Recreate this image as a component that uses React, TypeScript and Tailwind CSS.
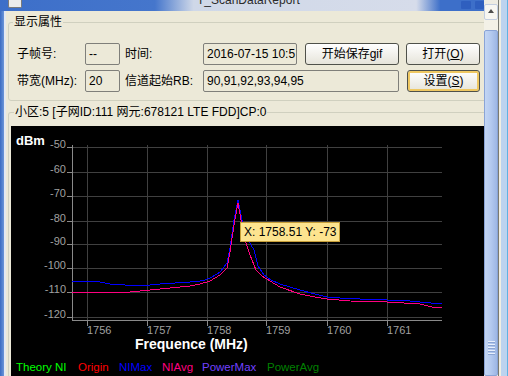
import React from 'react';

const blueLine =
  '61,156 69,155 79,155 89,156 99,158 114,159 129,160 139,159 149,158 164,157 179,156 189,155 194,154 201,151 209,146 216,137 219,122 223,94 227,74 230,89 233,104 237,114 243,124 247,140 253,149 260,154 269,158 279,161 289,164 304,168 316,171 329,172 349,173 376,174 389,174 409,176 431,178';

const pinkLine =
  '61,166 79,166 99,167 119,166 139,164 159,162 179,160 189,158 199,155 209,149 216,142 219,126 223,99 227,77 230,94 234,114 239,129 245,144 251,150 259,155 269,161 289,168 304,171 316,173 339,175 376,176 409,178 421,181 431,182';

const yTicks = [
  { y: 21, label: '-50' },
  { y: 46, label: '-60' },
  { y: 70, label: '-70' },
  { y: 95, label: '-80' },
  { y: 118, label: '-90' },
  { y: 142, label: '-100' },
  { y: 166, label: '-110' },
  { y: 191, label: '-120' },
];

const xTicks = [
  { x: 76, label: '1756' },
  { x: 136, label: '1757' },
  { x: 196, label: '1758' },
  { x: 255, label: '1759' },
  { x: 316, label: '1760' },
  { x: 376, label: '1761' },
];

const legend = [
  { name: 'Theory NI', cls: 'w-[62px] text-[#00ff00]' },
  { name: 'Origin', cls: 'w-[41px] text-[#ff0000]' },
  { name: 'NIMax', cls: 'w-[43px] text-[#0000ff]' },
  { name: 'NIAvg', cls: 'w-[40px] text-[#ff0080]' },
  { name: 'PowerMax', cls: 'w-[65px] text-[#7040ff]' },
  { name: 'PowerAvg', cls: 'text-[#008000]' },
];

function Field({ w, children }: { w: string; children?: React.ReactNode }) {
  return (
    <div
      className={`${w} flex h-[22px] shrink-0 items-center overflow-hidden whitespace-nowrap rounded-[2px] border border-[#7f7f7a] pl-[3px]`}
    >
      {children}
    </div>
  );
}

function Btn({ w, focus, children }: { w: string; focus?: boolean; children: React.ReactNode }) {
  return (
    <div
      className={`${w} flex h-[22px] shrink-0 items-center justify-center rounded-[3px] border border-[#4f514a] bg-gradient-to-b from-[#ffffff] to-[#e6e4da] ${
        focus ? 'shadow-[inset_0_0_0_2px_#efc862]' : ''
      }`}
    >
      {children}
    </div>
  );
}

function Chart() {
  return (
    <div className="relative mt-[6px] h-[252px] bg-black">
      <svg width="475" height="234" className="block">
        <text x="5" y="19" fill="#fff" fontSize="13" fontWeight="bold" fontFamily="Liberation Sans, sans-serif">
          dBm
        </text>
        <g stroke="#404040" strokeWidth="1" shapeRendering="crispEdges">
          {yTicks.map(t => (
            <line key={t.label} x1="61" x2="431" y1={t.y + 0.5} y2={t.y + 0.5} />
          ))}
          {xTicks.map(t => (
            <line key={t.label} x1={t.x + 0.5} x2={t.x + 0.5} y1="19" y2="194" />
          ))}
        </g>
        <g stroke="#8a8a8a" strokeWidth="1" shapeRendering="crispEdges">
          <line x1="61.5" x2="61.5" y1="19" y2="195" />
          <line x1="61" x2="431" y1="194.5" y2="194.5" />
          {yTicks.map(t => (
            <line key={t.label} x1="56" x2="61" y1={t.y + 0.5} y2={t.y + 0.5} />
          ))}
          {xTicks.map(t => (
            <line key={t.label} x1={t.x + 0.5} x2={t.x + 0.5} y1="194" y2="200" />
          ))}
        </g>
        <g fill="#a0a0a0" fontSize="11" fontFamily="Liberation Sans, sans-serif">
          {yTicks.map(t => (
            <text key={t.label} x="55" y={t.y + 1} textAnchor="end">
              {t.label}
            </text>
          ))}
          {xTicks.map(t => (
            <text key={t.label} x={t.x} y="208">
              {t.label}
            </text>
          ))}
        </g>
        <polyline points={blueLine} fill="none" stroke="#0000ff" strokeWidth="1" shapeRendering="crispEdges" />
        <polyline points={pinkLine} fill="none" stroke="#ff0080" strokeWidth="1" shapeRendering="crispEdges" />
        <text x="124" y="223" fill="#fff" fontSize="14" fontWeight="bold" fontFamily="Liberation Sans, sans-serif">
          Frequence (MHz)
        </text>
      </svg>
      <div className="flex pl-[5px] text-[11.5px] leading-[14px]">
        {legend.map(l => (
          <span key={l.name} className={`${l.cls} shrink-0 whitespace-nowrap`}>
            {l.name}
          </span>
        ))}
      </div>
      <div className="absolute left-[229px] top-[96px] h-[20px] w-[100px] whitespace-nowrap border border-[#c79f38] bg-[#fde48f] pl-[3px] text-[12px] leading-[18px]">
        X: 1758.51 Y: -73
      </div>
    </div>
  );
}

export default function App() {
  return (
    <div className="flex h-[376px] w-[508px] overflow-hidden bg-[#ece9d8] font-['Liberation_Sans','Noto_Sans_CJK_SC',sans-serif] text-[12px] leading-none text-black">
      <div className="flex w-[484px] shrink-0 flex-col">
        {/* title strip of the parent window */}
        <div className="relative h-[11px] shrink-0 overflow-hidden bg-[linear-gradient(to_right,#3d6fc9_0%,#4576cc_32%,#cfd8e8_40%,#d6dcea_86%,#3d6fc9_91%)]">
          <div className="absolute left-[8px] top-0 h-[8px] w-[14px] rounded-b-[2px] border border-t-0 border-[#7b7b7b] bg-[#ececec]" />
          <div className="absolute left-[197px] top-[-6px] text-[12px] leading-[12px] text-[#2b2b2b]">T_ScanDataReport</div>
          <div className="absolute left-[461px] top-[1px] h-[8px] w-[10px] rounded-[1px] bg-[#2f5fbf]" />
          <div className="absolute left-[475px] top-[1px] h-[8px] w-[9px] rounded-[1px] bg-[#2f5fbf]" />
        </div>
        <div className="flex min-h-0 flex-1">
          <div className="w-[4px] shrink-0 bg-gradient-to-r from-[#3a6bc3] to-[#6b95d8]" />
          <div className="w-[2px] shrink-0 bg-[#e3e8f1]" />
          <div className="min-w-0 flex-1 overflow-hidden pl-[2px]">
            <fieldset className="-mr-[3px] mt-[3px] rounded-[3px] border border-[#d0d0bf] pb-[8px] pl-[4px]">
              <legend className="px-[1px] leading-[16px]">显示属性</legend>
              <div className="flex flex-col gap-[5px] pl-[4px] pt-[13px]">
                <div className="flex h-[22px] items-center">
                  <span className="w-[68px] shrink-0">子帧号:</span>
                  <Field w="w-[35px]">--</Field>
                  <span className="ml-[5px] w-[78px] shrink-0">时间:</span>
                  <Field w="w-[94px]">2016-07-15 10:5</Field>
                  <div className="ml-[8px]">
                    <Btn w="w-[94px]">开始保存gif</Btn>
                  </div>
                  <div className="ml-[7px]">
                    <Btn w="w-[74px]">
                      打开(<span className="underline">O</span>)
                    </Btn>
                  </div>
                </div>
                <div className="flex h-[22px] items-center">
                  <span className="w-[68px] shrink-0">带宽(MHz):</span>
                  <Field w="w-[35px]">20</Field>
                  <span className="ml-[5px] w-[78px] shrink-0">信道起始RB:</span>
                  <Field w="w-[196px]">90,91,92,93,94,95</Field>
                  <div className="ml-[8px]">
                    <Btn w="w-[73px]" focus>
                      设置(<span className="underline">S</span>)
                    </Btn>
                  </div>
                </div>
              </div>
            </fieldset>
            <fieldset className="-mr-[3px] mt-[3px] rounded-t-[3px] border border-b-0 border-[#d0d0bf] pl-[2px]">
              <legend className="ml-[3px] whitespace-nowrap px-[1px] leading-[16px]">
                小区:5 [子网ID:111 网元:678121 LTE FDD]CP:0
              </legend>
              <Chart />
            </fieldset>
          </div>
        </div>
      </div>

      {/* scrollbar */}
      <div className="flex w-[14px] shrink-0 flex-col bg-[#f3f1e7]">
        <div className="h-[4px] bg-[#eeece2]" />
        <div className="flex h-[16px] items-start justify-center rounded-[2px] border border-[#c3cee0] bg-[#f7f6f1] pt-[4px]">
          <div className="h-0 w-0 border-x-[3px] border-b-[4px] border-x-transparent border-b-[#4d4d4d]" />
        </div>
        <div className="h-[10px]" />
        <div className="flex flex-1 flex-col items-center justify-end gap-[2px] rounded-[2px] border border-[#8aa4d6] bg-gradient-to-r from-[#c3d6f4] via-[#b3c9ef] to-[#9db6e4] pb-[21px]">
          <div className="h-[1px] w-[7px] bg-[#e8effc] shadow-[0_1px_0_#8ba5d4]" />
          <div className="h-[1px] w-[7px] bg-[#e8effc] shadow-[0_1px_0_#8ba5d4]" />
          <div className="h-[1px] w-[7px] bg-[#e8effc] shadow-[0_1px_0_#8ba5d4]" />
          <div className="h-[1px] w-[7px] bg-[#e8effc] shadow-[0_1px_0_#8ba5d4]" />
          <div className="h-[1px] w-[7px] bg-[#e8effc] shadow-[0_1px_0_#8ba5d4]" />
        </div>
      </div>
      <div className="w-[1px] shrink-0 bg-[#7a7a72]" />
      <div className="w-[2px] shrink-0 bg-[#f0eee2]" />
      <div className="w-[6px] shrink-0 bg-[#bcd3ef]" />
      <div className="w-[1px] shrink-0 bg-[#5fb2e2]" />
    </div>
  );
}
